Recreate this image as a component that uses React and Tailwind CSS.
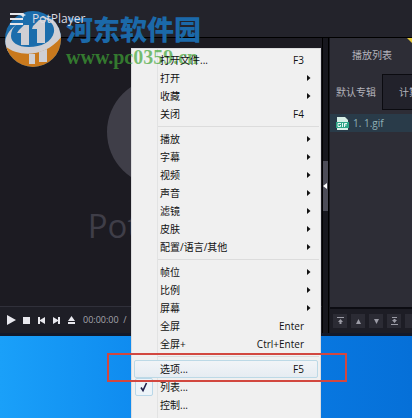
import React, { useState } from 'react';

const MENU = [
    [
        { label: '打开文件...', keys: 'F3' },
        { label: '打开', sub: true },
        { label: '收藏', sub: true },
        { label: '关闭', keys: 'F4' },
    ],
    [
        { label: '播放', sub: true },
        { label: '字幕', sub: true },
        { label: '视频', sub: true },
        { label: '声音', sub: true },
        { label: '滤镜', sub: true },
        { label: '皮肤', sub: true },
        { label: '配置/语言/其他', sub: true },
    ],
    [
        { label: '帧位', sub: true },
        { label: '比例', sub: true },
        { label: '屏幕', sub: true },
        { label: '全屏', keys: 'Enter' },
        { label: '全屏+', keys: 'Ctrl+Enter' },
    ],
    [
        { label: '选项...', keys: 'F5', active: true },
        { label: '列表...', checked: true },
        { label: '控制...' },
    ],
];

const TRANSPORT = [
    { label: '播放', d: 'M1 1 L10 6 L1 11 Z' },
    { label: '停止', d: 'M2 3 H9 V10 H2 Z' },
    { label: '上一个', d: 'M2 3 H4 V6 L9 3 V10 L4 7 V10 H2 Z' },
    { label: '下一个', d: 'M9 3 H7 V6 L2 3 V10 L7 7 V10 H9 Z' },
    { label: '弹出', d: 'M5.5 2 L9 7 H2 Z M2 8 H9 V10 H2 Z' },
];

const ORDER = [
    { label: '移到顶部', d: 'M2 1 H9 V2 H2 Z M5.5 3 L8 6 H6.5 V8 H4.5 V6 H3 Z' },
    { label: '上移', d: 'M5.5 3 L8 8 H3 Z' },
    { label: '下移', d: 'M3 3 H8 L5.5 8 Z' },
    { label: '移到底部', d: 'M3 1 H8 V2 H3 Z M4.5 3 H6.5 V4 H8 L5.5 7 L3 4 H4.5 Z M2 8 H9 V9 H2 Z' },
];

function MenuItem({ item }) {
    return (
        <li role="none" className="px-[2px]">
            <button
                role="menuitem"
                className={`flex h-[18px] w-full items-center rounded-[2px] border text-left text-[10px] leading-4 text-[#111] ${item.active ? 'border-[#bcd9e6] bg-linear-to-b from-[#f1f4f7] to-[#e6ecf2]' : 'border-transparent'}`}
            >
                <span className="flex w-[25px] shrink-0 items-center">
                    {item.checked && (
                        <span className="flex h-[18px] w-[18px] items-center justify-center rounded-[2px] border border-[#b9d7e8] bg-[#edf4f9]">
                            <svg viewBox="0 0 12 12" className="h-3 w-3" fill="none" stroke="#20204a" strokeWidth="1.6">
                                <path d="M3 6.5 L5 9.5 L8.5 2" />
                            </svg>
                        </span>
                    )}
                </span>
                <span className="relative z-20 flex-1 leading-3 whitespace-nowrap">{item.label}</span>
                {item.keys && <span className="pr-[13px]">{item.keys}</span>}
                {item.sub && (
                    <svg viewBox="0 0 4 8" className="mr-[6px] h-2 w-1" fill="#111">
                        <path d="M0 1 L3.5 4 L0 7 Z" />
                    </svg>
                )}
            </button>
        </li>
    );
}

function ContextMenu() {
    return (
        <div
            role="menu"
            className="absolute top-12 bottom-0 left-[131px] w-[190px] overflow-hidden border-x border-t border-[#dcdcde] bg-[#f0f0f0] pt-[2px]"
        >
            {/* icon gutter line */}
            <span className="absolute inset-y-0 left-[25px] w-px bg-[#e2e3e3]" />
            {MENU.map((group, i) => (
                <ul key={i} role="group" className="relative">
                    {i > 0 && <li role="separator" className="my-[3px] mr-px ml-[26px] h-px bg-[#dcdcdc]" />}
                    {group.map((item) => <MenuItem key={item.label} item={item} />)}
                </ul>
            ))}
        </div>
    );
}

function Watermark() {
    return (
        <div className="pointer-events-none absolute top-[11px] left-[5px] z-10 flex items-start gap-[5px]">
            <svg viewBox="0 0 56 56" className="h-14 w-14 shrink-0">
                <defs>
                    <clipPath id="globe"><circle cx="28" cy="28" r="28" /></clipPath>
                </defs>
                <g clipPath="url(#globe)">
                    <path d="M0 0 H56 V56 H0 Z" fill="#1b6dac" />
                    {/* ring: thin on the left, widening to the right and below */}
                    <path
                        fillRule="evenodd"
                        d="M12 13 C4 19 -2 27 0 40 L20 48 C40 48 52 38 57 26 C57 14 48 5 34 6 C44 8 50 13 49 21 C47 31 36 36 24 36 C12 36 6 31 6 25 C6 20 8 16 12 13 Z"
                        fill="#cfcfd4"
                    />
                    <path d="M14 19 L19 14 H24 V34 H16 V22 H12 Z" fill="#cfcfd4" />
                    <path d="M28 15 L34 9 H40 V32 H32 V18 H27 Z" fill="#cfcfd4" />
                    <path d="M0 35 C14 47 42 46 57 25 V56 H0 Z" fill="#c9791d" />
                    <path d="M24 43 H30 V53 H24 Z M34 41 L42 38 V51 H34 Z" fill="#cfcfd4" />
                    <path d="M18 1 L19 3 L21 4 L19 5 L18 7 L17 5 L15 4 L17 3 Z" fill="#dfe6ee" />
                </g>
            </svg>
            <div className="flex flex-col">
                <span className="text-[27px] leading-9 font-black whitespace-nowrap text-[#1b69a9] font-['Noto_Sans_CJK_SC',sans-serif]">河东软件园</span>
                <span className="text-[20px] leading-5 font-bold text-[#3fa535]/70 font-['Liberation_Serif',serif]">www.pc0359.cn</span>
            </div>
        </div>
    );
}

function Playlist() {
    const [tab, setTab] = useState('默认专辑');

    return (
        <aside className="flex w-[83px] shrink-0 flex-col overflow-hidden border-l border-[#15151c] bg-[#2d2d36] text-[10px] text-[#b4b4bc]">
            <h2 className="relative flex h-[34px] shrink-0 items-center pl-[22px] whitespace-nowrap">
                播放列表
                <span className="absolute top-0 right-0 h-0 w-0 border-t-[5px] border-l-[5px] border-t-[#e4c83c] border-l-transparent" />
            </h2>
            <div className="mt-[2px] flex h-[36px] shrink-0" role="tablist">
                {['默认专辑', '计算机'].map((name) => (
                    <button
                        key={name}
                        role="tab"
                        aria-selected={tab === name}
                        onClick={() => setTab(name)}
                        className={`shrink-0 whitespace-nowrap ${tab === name ? 'w-[52px] pl-[6px] text-left' : 'border border-[#0b0b10] bg-[#22222b] px-4'}`}
                    >
                        {name}
                    </button>
                ))}
            </div>
            <ul className="mt-1 flex-1">
                <li className="flex h-[18px] items-center gap-1 bg-[#293b49] pl-[6px] text-[#8fb0b6]">
                    <svg viewBox="0 0 13 13" className="h-[13px] w-[13px] shrink-0">
                        <path d="M1 0 H9 L12 3 V13 H1 Z" fill="#d6efe6" />
                        <path d="M0 5 H13 V11 H0 Z" fill="#2da487" />
                        <path d="M5 6.5 H2 V9.5 H4.5 V8 M6.5 6 V10 M8.5 10 V6.5 H11 M8.5 8 H10.5" fill="none" stroke="#fff" strokeWidth="0.9" />
                    </svg>
                    1. 1.gif
                </li>
            </ul>
            <div className="flex h-[26px] shrink-0 items-center gap-1 border-t-2 border-[#0c0c12] bg-[#1d1d25] pl-[3px]">
                {ORDER.map((o) => (
                    <button key={o.label} aria-label={o.label} className="flex h-[14px] w-[14px] shrink-0 items-center justify-center bg-[#2b2b34]">
                        <svg viewBox="0 0 11 10" className="h-[10px] w-[11px]" fill="#9c9ca6"><path d={o.d} /></svg>
                    </button>
                ))}
                <span className="h-[14px] w-[14px] shrink-0 bg-[#2b2b34]" />
            </div>
        </aside>
    );
}

export default function App() {
    return (
        <main className="relative flex min-h-screen flex-col overflow-hidden bg-linear-to-r from-[#1aa0f9] via-[#0a80ea] to-[#0670d8] font-['Open_Sans','Noto_Sans_CJK_SC',sans-serif]">
            <section className="flex h-[336px] flex-col border-b-[3px] border-[#12192a] bg-[#1c1b22]">
                <header className="flex h-[38px] shrink-0 items-center gap-[9px] border-b border-black bg-[#23232b] pl-[10px]">
                    <button aria-label="菜单" className="relative z-20 flex w-[13px] flex-col gap-[3px]">
                        <span className="h-[2px] bg-[#e6e6ea]" />
                        <span className="h-[2px] bg-[#e6e6ea]" />
                        <span className="h-[2px] bg-[#e6e6ea]" />
                    </button>
                    <h1 className="relative z-20 text-[12px] text-[#dcdce2]">PotPlayer</h1>
                </header>
                <div className="flex min-h-0 flex-1">
                    <div className="flex min-w-0 flex-1 flex-col">
                        <div className="flex flex-1 flex-col items-center pt-10">
                            <div className="h-[108px] w-[108px] shrink-0 rounded-full bg-[#3f3e48]" />
                            <p className="mt-4 text-[33px] leading-[48px] text-[#3f3e48]">PotPlayer</p>
                        </div>
                        <div className="flex h-[27px] shrink-0 items-center gap-1 border-t border-[#30303a] bg-[#1e1e26] pl-[6px]">
                            {TRANSPORT.map((t) => (
                                <button key={t.label} aria-label={t.label} className="shrink-0">
                                    <svg viewBox="0 0 11 12" className="h-3 w-[11px]" fill="#e8e8ee"><path d={t.d} /></svg>
                                </button>
                            ))}
                            <span className="ml-[2px] text-[9px] whitespace-pre text-[#a6a6ae]">00:00:00  /</span>
                        </div>
                    </div>
                    <div className="flex w-[7px] shrink-0 items-center border-x border-black bg-[#17171e]">
                        <button aria-label="折叠列表" className="flex h-[50px] w-full items-center bg-[#4c4c58]">
                            <svg viewBox="0 0 4 6" className="h-[6px] w-1" fill="#fff"><path d="M4 0 L0 3 L4 6 Z" /></svg>
                        </button>
                    </div>
                    <Playlist />
                </div>
            </section>
            <ContextMenu />
            <Watermark />
            <div className="pointer-events-none absolute top-[353px] left-[107px] h-[29px] w-[240px] border-2 border-[#d2473f]" />
        </main>
    );
}
